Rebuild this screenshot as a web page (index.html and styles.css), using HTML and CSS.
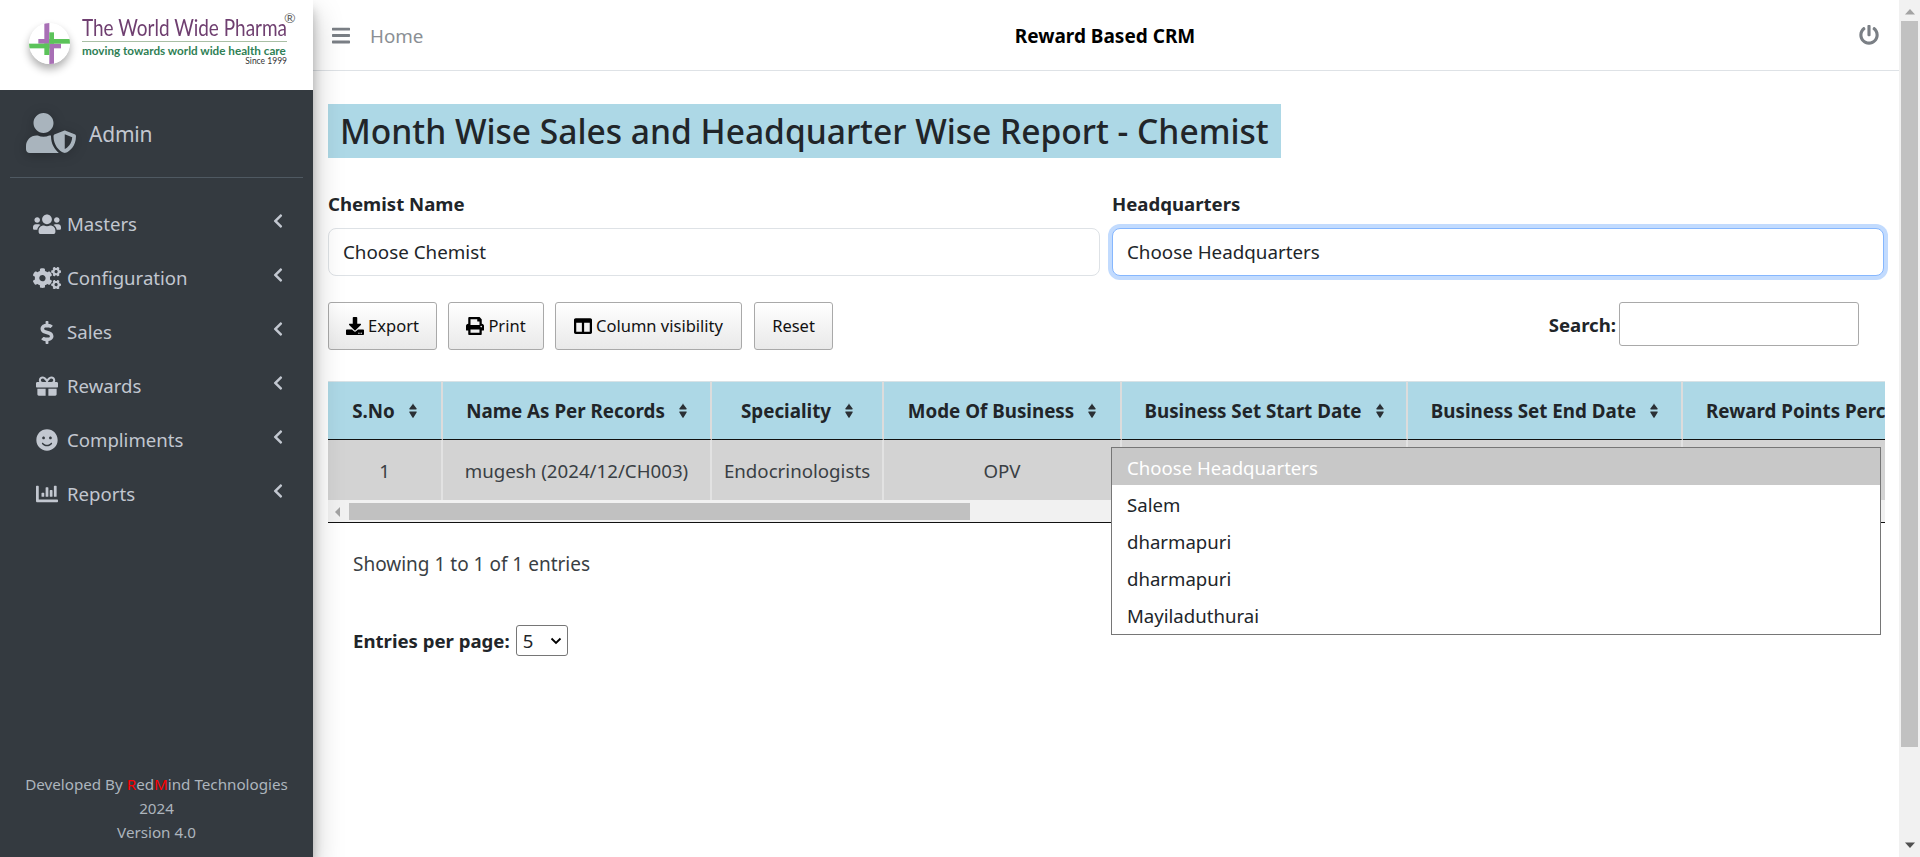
FILE: index.html
```html
<!DOCTYPE html>
<html lang="en">
<head>
<meta charset="utf-8">
<title>Month Wise Sales and Headquarter Wise Report - Chemist</title>
<link rel="stylesheet" href="styles.css">
</head>
<body>
<svg class="defs" aria-hidden="true">
  <symbol id="i-chev" viewBox="0 0 320 512"><path d="M34.52 239.03L228.87 44.69c9.37-9.37 24.57-9.37 33.94 0l22.67 22.67c9.36 9.36 9.37 24.52.04 33.9L131.49 256l154.02 154.75c9.34 9.38 9.32 24.54-.04 33.9l-22.67 22.67c-9.37 9.37-24.57 9.37-33.94 0L34.52 272.97c-9.37-9.37-9.37-24.57 0-33.94z"/></symbol>
  <symbol id="i-sort" viewBox="0 0 8 15"><path d="M3.6.3 7.6 5.6c.3.4 0 .9-.4.9H.8c-.4 0-.7-.5-.4-.9L4.4.3c-.2-.2-.6-.2-.8 0zM.8 8.5h6.4c.4 0 .7.5.4.9L4.4 14.7c-.2.2-.6.2-.8 0L.4 9.4c-.3-.4 0-.9.4-.9z"/></symbol>
</svg>
<div class="app">
  <aside class="sidebar">
    <div class="brand">
      <svg class="brand-mark" viewBox="87 69 123 123">
        <circle cx="148.5" cy="130.5" r="61.5" fill="#fff"/>
        <g fill="#a86fb5"><rect x="133" y="69" width="15" height="62"/><rect x="148" y="131" width="14" height="61"/><rect x="115" y="117" width="33" height="14"/><rect x="148" y="131" width="35" height="14"/></g>
        <g fill="#5cc35a"><rect x="87" y="131" width="61" height="14"/><rect x="148" y="117" width="62" height="14"/><rect x="148" y="97" width="14" height="34"/><rect x="133" y="131" width="15" height="34"/></g>
      </svg>
      <div class="brand-text">
        <div class="brand-name"><span class="brand-name-text">The World Wide Pharma</span><span class="brand-reg">®</span></div>
        <div class="brand-tag">moving towards world wide health care</div>
        <div class="brand-since">Since 1999</div>
      </div>
    </div>
    <div class="user">
      <svg class="user-icon" viewBox="0 0 640 512"><path d="M622.3 271.1l-115.2-45c-4.1-1.6-12.6-3.7-22.2 0l-115.2 45c-10.7 4.2-17.7 14-17.7 24.9 0 111.6 68.7 188.8 132.9 213.9 9.6 3.7 18 1.6 22.2 0C558.4 489.9 640 420.5 640 296c0-10.9-7-20.7-17.7-24.9zM496 462.4V273.3l95.5 37.3c-5.6 87.1-60.9 135.4-95.5 151.8zM224 256c70.7 0 128-57.3 128-128S294.7 0 224 0 96 57.3 96 128s57.3 128 128 128zm96 40c0-2.5.8-4.8 1.1-7.2-2.5-.1-4.9-.8-7.5-.8h-16.7c-22.2 10.2-46.9 16-72.9 16s-50.6-5.8-72.9-16h-16.7C60.2 288 0 348.2 0 422.4V464c0 26.5 21.5 48 48 48h352c6.8 0 13.3-1.5 19.2-4-54-42.9-99.2-116.7-99.2-212z"/></svg>
      <span class="user-name">Admin</span>
    </div>
    <nav class="nav">
      <a class="nav-item"><span class="nav-ico"><svg class="ico-w" viewBox="0 0 640 512"><path d="M96 224c35.3 0 64-28.7 64-64s-28.7-64-64-64-64 28.7-64 64 28.7 64 64 64zm448 0c35.3 0 64-28.7 64-64s-28.7-64-64-64-64 28.7-64 64 28.7 64 64 64zm32 32h-64c-17.6 0-33.5 7.1-45.1 18.6 40.3 22.1 68.9 62 75.1 109.4h66c17.7 0 32-14.3 32-32v-32c0-35.3-28.7-64-64-64zm-256 0c61.9 0 112-50.1 112-112S381.9 32 320 32 208 82.1 208 144s50.1 112 112 112zm76.8 32h-8.3c-20.8 10-43.9 16-68.5 16s-47.6-6-68.5-16h-8.3C179.6 288 128 339.6 128 403.2V432c0 26.5 21.5 48 48 48h288c26.5 0 48-21.5 48-48v-28.8c0-63.6-51.6-115.2-115.2-115.2zm-223.7-13.4C161.5 263.1 145.6 256 128 256H64c-35.3 0-64 28.7-64 64v32c0 17.7 14.3 32 32 32h65.9c6.3-47.4 34.9-87.3 75.2-109.4z"/></svg></span><span class="nav-label">Masters</span><svg class="chev"><use href="#i-chev"/></svg></a>
      <a class="nav-item"><span class="nav-ico"><svg class="ico-w" viewBox="0 0 640 512"><path d="M512.1 191l-8.2 14.3c-3 5.3-9.4 7.5-15.1 5.4-11.8-4.4-22.6-10.7-32.1-18.6-4.6-3.8-5.8-10.5-2.8-15.7l8.2-14.3c-6.9-8-12.3-17.3-15.9-27.4h-16.5c-6 0-11.2-4.3-12.2-10.3-2-12-2.1-24.6 0-37.1 1-6 6.2-10.4 12.2-10.4h16.5c3.6-10.1 9-19.4 15.9-27.4l-8.2-14.3c-3-5.2-1.9-11.9 2.8-15.7 9.5-7.9 20.4-14.2 32.1-18.6 5.7-2.1 12.1.1 15.1 5.4l8.2 14.3c10.5-1.9 21.2-1.9 31.7 0L552 6.3c3-5.3 9.4-7.5 15.1-5.4 11.8 4.4 22.6 10.7 32.1 18.6 4.6 3.8 5.8 10.5 2.8 15.7l-8.2 14.3c6.9 8 12.3 17.3 15.9 27.4h16.5c6 0 11.2 4.3 12.2 10.3 2 12 2.1 24.6 0 37.1-1 6-6.2 10.4-12.2 10.4h-16.5c-3.6 10.1-9 19.4-15.9 27.4l8.2 14.3c3 5.2 1.9 11.9-2.8 15.7-9.5 7.9-20.4 14.2-32.1 18.6-5.7 2.1-12.1-.1-15.1-5.4l-8.2-14.3c-10.4 1.9-21.2 1.9-31.7 0zm-10.5-58.8c38.5 29.6 82.4-14.3 52.8-52.8-38.5-29.7-82.4 14.3-52.8 52.8zM386.3 286.1l33.7 16.8c10.1 5.8 14.5 18.1 10.5 29.1-8.9 24.2-26.4 46.4-42.6 65.8-7.4 8.9-20.2 11.1-30.3 5.3l-29.1-16.8c-16 13.7-34.6 24.6-54.9 31.7v33.6c0 11.6-8.3 21.6-19.7 23.6-24.6 4.2-50.4 4.4-75.9 0-11.5-2-20-11.9-20-23.6V418c-20.3-7.2-38.9-18-54.9-31.7L74 403c-10 5.8-22.9 3.6-30.3-5.3-16.2-19.4-33.3-41.6-42.2-65.7-4-10.9.4-23.2 10.5-29.1l33.3-16.8c-3.9-20.9-3.9-42.4 0-63.4L12 205.8c-10.1-5.8-14.6-18.1-10.5-29 8.9-24.2 26-46.4 42.2-65.8 7.4-8.9 20.2-11.1 30.3-5.3l29.1 16.8c16-13.7 34.6-24.6 54.9-31.7V57.1c0-11.5 8.2-21.5 19.6-23.5 24.6-4.2 50.5-4.4 76-.1 11.5 2 20 11.9 20 23.6v33.6c20.3 7.2 38.9 18 54.9 31.7l29.1-16.8c10-5.8 22.9-3.6 30.3 5.3 16.2 19.4 33.2 41.6 42.1 65.8 4 10.9.1 23.2-10 29.1l-33.7 16.8c3.9 21 3.9 42.5 0 63.5zm-117.6 21.1c59.2-77-28.7-164.9-105.7-105.7-59.2 77 28.7 164.9 105.7 105.7zm243.4 182.7l-8.2 14.3c-3 5.3-9.4 7.5-15.1 5.4-11.8-4.4-22.6-10.7-32.1-18.6-4.6-3.8-5.8-10.5-2.8-15.7l8.2-14.3c-6.9-8-12.3-17.3-15.9-27.4h-16.5c-6 0-11.2-4.3-12.2-10.3-2-12-2.1-24.6 0-37.1 1-6 6.2-10.4 12.2-10.4h16.5c3.6-10.1 9-19.4 15.9-27.4l-8.2-14.3c-3-5.2-1.9-11.9 2.8-15.7 9.5-7.9 20.4-14.2 32.1-18.6 5.7-2.1 12.1.1 15.1 5.4l8.2 14.3c10.5-1.9 21.2-1.9 31.7 0l8.2-14.3c3-5.3 9.4-7.5 15.1-5.4 11.8 4.4 22.6 10.7 32.1 18.6 4.6 3.8 5.8 10.5 2.8 15.7l-8.2 14.3c6.9 8 12.3 17.3 15.9 27.4h16.5c6 0 11.2 4.3 12.2 10.3 2 12 2.1 24.6 0 37.1-1 6-6.2 10.4-12.2 10.4h-16.5c-3.6 10.1-9 19.4-15.9 27.4l8.2 14.3c3 5.2 1.9 11.9-2.8 15.7-9.5 7.9-20.4 14.2-32.1 18.6-5.7 2.1-12.1-.1-15.1-5.4l-8.2-14.3c-10.4 1.9-21.2 1.9-31.7 0zM501.6 431c38.5 29.6 82.4-14.3 52.8-52.8-38.5-29.6-82.4 14.3-52.8 52.8z"/></svg></span><span class="nav-label">Configuration</span><svg class="chev"><use href="#i-chev"/></svg></a>
      <a class="nav-item"><span class="nav-ico"><svg class="ico-dollar" viewBox="0 0 288 512"><path d="M209.2 233.4l-108-31.6C88.7 198.2 80 186.5 80 173.5c0-16.3 13.2-29.5 29.5-29.5h66.3c12.2 0 24.2 3.7 34.2 10.5 6.1 4.1 14.3 3.1 19.5-2l34.8-34c7.1-6.9 6.1-18.4-1.8-24.5C238 74.8 207.4 64.1 176 64V16c0-8.8-7.2-16-16-16h-32c-8.8 0-16 7.2-16 16v48h-2.5C45.8 64-5.4 118.7.5 183.6c4.2 46.1 39.4 83.6 83.8 96.6l102.5 30c12.5 3.7 21.2 15.3 21.2 28.3 0 16.3-13.2 29.5-29.5 29.5h-66.3C100 368 88 364.3 78 357.5c-6.1-4.1-14.3-3.1-19.5 2l-34.8 34c-7.1 6.9-6.1 18.4 1.8 24.5 24.5 19.2 55.1 29.9 86.5 30v48c0 8.8 7.2 16 16 16h32c8.8 0 16-7.2 16-16v-48.2c46.6-.9 90.3-28.6 105.7-72.7 21.5-61.6-14.6-124.8-72.5-141.7z"/></svg></span><span class="nav-label">Sales</span><svg class="chev"><use href="#i-chev"/></svg></a>
      <a class="nav-item"><span class="nav-ico"><svg class="ico-sq" viewBox="0 0 512 512"><path d="M32 448c0 17.7 14.3 32 32 32h160V320H32v128zm256 32h160c17.7 0 32-14.3 32-32V320H288v160zm192-320h-42.1c6.2-12.1 10.1-25.5 10.1-40 0-48.5-39.5-88-88-88-41.6 0-68.5 21.3-103 68.3-34.5-47-61.4-68.3-103-68.3-48.5 0-88 39.5-88 88 0 14.5 3.8 27.9 10.1 40H32c-17.7 0-32 14.3-32 32v80c0 8.8 7.2 16 16 16h480c8.8 0 16-7.2 16-16v-80c0-17.7-14.3-32-32-32zm-326.1 0c-22.1 0-40-17.9-40-40s17.9-40 40-40c19.9 0 34.6 3.3 86.1 80h-86.1zm206.1 0h-86.1c51.4-76.5 65.7-80 86.1-80 22.1 0 40 17.9 40 40s-17.9 40-40 40z"/></svg></span><span class="nav-label">Rewards</span><svg class="chev"><use href="#i-chev"/></svg></a>
      <a class="nav-item"><span class="nav-ico"><svg class="ico-sq" viewBox="0 0 496 512"><path d="M248 8C111 8 0 119 0 256s111 248 248 248 248-111 248-248S385 8 248 8zm80 168c17.7 0 32 14.3 32 32s-14.3 32-32 32-32-14.3-32-32 14.3-32 32-32zm-160 0c17.7 0 32 14.3 32 32s-14.3 32-32 32-32-14.3-32-32 14.3-32 32-32zm194.8 170.2C334.3 380.4 292.5 400 248 400s-86.3-19.6-114.8-53.8c-13.6-16.3 11-36.7 24.6-20.5 22.4 26.9 55.2 42.2 90.2 42.2s67.8-15.4 90.2-42.2c13.4-16.2 38.1 4.2 24.6 20.5z"/></svg></span><span class="nav-label">Compliments</span><svg class="chev"><use href="#i-chev"/></svg></a>
      <a class="nav-item"><span class="nav-ico"><svg class="ico-sq" viewBox="0 0 512 512"><path d="M332.8 320h38.4c6.4 0 12.8-6.4 12.8-12.8V172.8c0-6.4-6.4-12.8-12.8-12.8h-38.4c-6.4 0-12.8 6.4-12.8 12.8v134.4c0 6.4 6.4 12.8 12.8 12.8zm96 0h38.4c6.4 0 12.8-6.4 12.8-12.8V76.8c0-6.4-6.4-12.8-12.8-12.8h-38.4c-6.4 0-12.8 6.4-12.8 12.8v230.4c0 6.4 6.4 12.8 12.8 12.8zm-288 0h38.4c6.4 0 12.8-6.4 12.8-12.8v-70.4c0-6.4-6.4-12.8-12.8-12.8h-38.4c-6.4 0-12.8 6.4-12.8 12.8v70.4c0 6.4 6.4 12.8 12.8 12.8zm96 0h38.4c6.4 0 12.8-6.4 12.8-12.8V108.8c0-6.4-6.4-12.8-12.8-12.8h-38.4c-6.4 0-12.8 6.4-12.8 12.8v198.4c0 6.4 6.4 12.8 12.8 12.8zM496 384H64V80c0-8.84-7.16-16-16-16H16C7.16 64 0 71.16 0 80v336c0 17.67 14.33 32 32 32h464c8.84 0 16-7.16 16-16v-32c0-8.84-7.16-16-16-16z"/></svg></span><span class="nav-label">Reports</span><svg class="chev"><use href="#i-chev"/></svg></a>
    </nav>
    <footer class="side-foot">
      <div>Developed By <span class="red">R</span>ed<span class="red">M</span>ind Technologies</div>
      <div>2024</div>
      <div>Version 4.0</div>
    </footer>
  </aside>

  <main class="main">
    <header class="topbar">
      <div class="top-left">
        <svg class="bars" viewBox="0 0 448 512"><path d="M16 132h416c8.837 0 16-7.163 16-16V76c0-8.837-7.163-16-16-16H16C7.163 60 0 67.163 0 76v40c0 8.837 7.163 16 16 16zm0 160h416c8.837 0 16-7.163 16-16v-40c0-8.837-7.163-16-16-16H16c-8.837 0-16 7.163-16 16v40c0 8.837 7.163 16 16 16zm0 160h416c8.837 0 16-7.163 16-16v-40c0-8.837-7.163-16-16-16H16c-8.837 0-16 7.163-16 16v40c0 8.837 7.163 16 16 16z"/></svg>
        <span class="home">Home</span>
      </div>
      <div class="top-title">Reward Based CRM</div>
      <div class="top-right">
        <svg class="power" viewBox="0 0 512 512"><path d="M400 54.1c63 45 104 118.6 104 201.9 0 136.8-110.8 247.7-247.5 248C120 504.3 8.2 393 8 256.4 7.9 173.1 48.9 99.3 111.8 54.2c11.7-8.3 28-4.8 35 7.7L162.6 90c5.9 10.5 3.1 23.8-6.6 31-41.5 30.8-68 79.6-68 134.9-.1 92.3 74.5 168.1 168 168.1 91.6 0 168.6-74.2 168-169.1-.3-51.8-24.7-101.8-68.1-134-9.7-7.2-12.4-20.5-6.5-30.9l15.8-28.1c7-12.4 23.2-16.1 34.8-7.8zM296 264V24c0-13.3-10.7-24-24-24h-32c-13.3 0-24 10.7-24 24v240c0 13.3 10.7 24 24 24h32c13.3 0 24-10.7 24-24z"/></svg>
      </div>
    </header>

    <section class="content">
      <h1 class="title">Month Wise Sales and Headquarter Wise Report - Chemist</h1>

      <div class="filters">
        <div class="field">
          <label class="field-label">Chemist Name</label>
          <div class="select-box">Choose Chemist</div>
        </div>
        <div class="field">
          <label class="field-label">Headquarters</label>
          <div class="select-box is-focus">Choose Headquarters</div>
          <ul class="menu">
            <li class="menu-item is-active">Choose Headquarters</li>
            <li class="menu-item">Salem</li>
            <li class="menu-item">dharmapuri</li>
            <li class="menu-item">dharmapuri</li>
            <li class="menu-item">Mayiladuthurai</li>
          </ul>
        </div>
      </div>

      <div class="toolbar">
        <button class="btn btn-export"><svg class="btn-ico" viewBox="0 0 512 512"><path d="M216 0h80c13.3 0 24 10.7 24 24v168h87.7c17.8 0 26.7 21.5 14.1 34.1L269.7 378.3c-7.5 7.5-19.8 7.5-27.3 0L90.1 226.1c-12.6-12.6-3.7-34.1 14.1-34.1H192V24c0-13.3 10.7-24 24-24zm296 376v112c0 13.3-10.7 24-24 24H24c-13.3 0-24-10.7-24-24V376c0-13.3 10.7-24 24-24h146.7l49 49c20.1 20.1 52.5 20.1 72.6 0l49-49H488c13.3 0 24 10.7 24 24zm-124 88c0-11-9-20-20-20s-20 9-20 20 9 20 20 20 20-9 20-20zm64 0c0-11-9-20-20-20s-20 9-20 20 9 20 20 20 20-9 20-20z"/></svg>Export</button>
        <button class="btn btn-print"><svg class="btn-ico" viewBox="0 0 512 512"><path d="M448 192V77.25c0-8.49-3.37-16.62-9.37-22.63L393.37 9.37c-6-6-14.14-9.37-22.63-9.37H96C78.33 0 64 14.33 64 32v160c-35.35 0-64 28.65-64 64v112c0 8.84 7.16 16 16 16h48v96c0 17.67 14.33 32 32 32h320c17.67 0 32-14.33 32-32v-96h48c8.84 0 16-7.16 16-16V256c0-35.35-28.65-64-64-64zm-64 256H128v-96h256v96zm0-224H128V64h192v48c0 8.84 7.16 16 16 16h48v96zm48 72c-13.25 0-24-10.75-24-24 0-13.26 10.75-24 24-24s24 10.74 24 24c0 13.25-10.75 24-24 24z"/></svg>Print</button>
        <button class="btn btn-cols"><svg class="btn-ico" viewBox="0 0 512 512"><path d="M464 32H48C21.49 32 0 53.49 0 80v352c0 26.51 21.49 48 48 48h416c26.51 0 48-21.49 48-48V80c0-26.51-21.49-48-48-48zM224 416H64V160h160v256zm224 0H288V160h160v256z"/></svg>Column visibility</button>
        <button class="btn btn-reset">Reset</button>
        <label class="search"><span class="search-label">Search:</span><span class="search-input"></span></label>
      </div>

      <div class="table-wrap">
        <div class="table-clip">
          <table class="report">
            <colgroup><col class="c1"><col class="c2"><col class="c3"><col class="c4"><col class="c5"><col class="c6"><col class="c7"></colgroup>
            <thead>
              <tr>
                <th><span class="th-in">S.No<svg class="sort"><use href="#i-sort"/></svg></span></th>
                <th><span class="th-in">Name As Per Records<svg class="sort"><use href="#i-sort"/></svg></span></th>
                <th><span class="th-in">Speciality<svg class="sort"><use href="#i-sort"/></svg></span></th>
                <th><span class="th-in">Mode Of Business<svg class="sort"><use href="#i-sort"/></svg></span></th>
                <th><span class="th-in">Business Set Start Date<svg class="sort"><use href="#i-sort"/></svg></span></th>
                <th><span class="th-in">Business Set End Date<svg class="sort"><use href="#i-sort"/></svg></span></th>
                <th class="th-last">Reward Points Percentage</th>
              </tr>
            </thead>
            <tbody>
              <tr><td>1</td><td>mugesh (2024/12/CH003)</td><td>Endocrinologists</td><td>OPV</td><td></td><td></td><td></td></tr>
            </tbody>
          </table>
        </div>
        <div class="hscroll">
          <svg class="hscroll-arrow" viewBox="0 0 6 10"><path d="M5 0v10L0 5z"/></svg>
          <div class="hscroll-thumb"></div>
        </div>
      </div>

      <p class="info">Showing 1 to 1 of 1 entries</p>
      <div class="entries">
        <span class="entries-label">Entries per page:</span>
        <span class="entries-select"><span>5</span><svg class="entries-caret" viewBox="0 0 12 8"><path d="M1.5 1.5 6 6l4.5-4.5" fill="none" stroke="#000" stroke-width="1.8"/></svg></span>
      </div>
    </section>
  </main>

  <div class="vscroll">
    <svg class="vs-arrow" viewBox="0 0 10 6"><path d="M5 0l5 5.5H0z"/></svg>
    <div class="vs-thumb"></div>
    <svg class="vs-arrow vs-down" viewBox="0 0 10 6"><path d="M5 6L0 .5h10z"/></svg>
  </div>
</div>
</body>
</html>
```

FILE: styles.css
```css
* { box-sizing: border-box; }
html, body { margin: 0; height: 100%; }
body {
  font-family: "Noto Sans", "Open Sans", "Liberation Sans", sans-serif;
  font-size: 16px;
  line-height: 24px;
  color: #212529;
  background: #fff;
  overflow: hidden;
}
.defs { display: none; }
.app { display: flex; width: 1920px; height: 857px; }

/* Sidebar */
.sidebar {
  position: relative;
  z-index: 5;
  width: 313px;
  flex: none;
  display: flex;
  flex-direction: column;
  background: #343a40;
  color: #c2c7d0;
  box-shadow: 0 14px 28px rgba(0,0,0,.25), 0 10px 10px rgba(0,0,0,.22);
}
.brand {
  height: 90px;
  flex: none;
  background: #fff;
  display: flex;
  align-items: flex-start;
  padding: 15px 0 0 29px;
  gap: 12px;
}
.brand-mark {
  width: 41px;
  height: 41px;
  margin-top: 8px;
  border-radius: 50%;
  flex: none;
  box-shadow: 0 5px 9px rgba(0,0,0,.32);
}
.brand-text { width: 205px; }
.brand-name {
  position: relative;
  font-family: Lato, sans-serif;
  font-size: 24px;
  line-height: 24px;
  color: #6f3f70;
  white-space: nowrap;
  padding-bottom: 2px;
  border-bottom: 1px solid #a9bfa5;
}
.brand-name-text {
  display: inline-block;
  transform: scaleX(.79);
  transform-origin: left center;
}
.brand-reg {
  position: absolute;
  top: -4px;
  left: 202px;
  font-size: 14px;
  line-height: 14px;
  color: #666;
}
.brand-tag {
  font-family: Lato, sans-serif;
  font-size: 11.7px;
  font-weight: 700;
  line-height: 14px;
  margin-top: 1px;
  color: #2f7f55;
  white-space: nowrap;
}
.brand-since {
  font-family: Lato, sans-serif;
  font-size: 8.5px;
  line-height: 9px;
  margin-top: 0;
  color: #333;
  text-align: right;
}
.user {
  height: 88px;
  flex: none;
  margin: 0 10px;
  padding-left: 16px;
  display: flex;
  align-items: center;
  border-bottom: 1px solid #4f5962;
}
.user-icon { width: 50px; height: 40px; fill: #a9b4bd; flex: none; margin-top: -1px; filter: drop-shadow(0 2px 6px rgba(0,0,0,.25)); }
.user-name { margin-left: 13px; font-size: 21px; color: #c2c7d0; letter-spacing: -.2px; }
.nav { padding-top: 19px; display: flex; flex-direction: column; }
.nav-item {
  height: 54px;
  display: flex;
  align-items: center;
  font-size: 18.6px;
  color: #c2c7d0;
  padding-left: 33px;
  position: relative;
}
.nav-ico { width: 28px; flex: none; display: flex; justify-content: center; margin-right: 6px; }
.ico-w { width: 28px; height: 22.4px; fill: #c2c7d0; }
.ico-sq { width: 22px; height: 22px; fill: #c2c7d0; }
.ico-dollar { width: 14px; height: 23px; fill: #c2c7d0; }
.nav-label { flex: 1; }
.chev { width: 12px; height: 16px; fill: #c2c7d0; margin-right: 29px; margin-top: -6px; flex: none; }
.side-foot {
  margin-top: auto;
  padding-bottom: 13px;
  text-align: center;
  font-size: 15.2px;
  line-height: 24px;
  color: #adb5bd;
}
.red { color: #ff0000; }

/* Main */
.main { flex: 1; min-width: 0; display: flex; flex-direction: column; }
.topbar {
  height: 71px;
  flex: none;
  display: grid;
  grid-template-columns: 1fr auto 1fr;
  align-items: center;
  border-bottom: 1px solid #dee2e6;
  padding: 0 21px 0 19px;
}
.top-left { display: flex; align-items: center; }
.bars { width: 18px; height: 21px; fill: #7a7f85; margin-right: 20px; }
.home { font-size: 18.8px; color: #8a8f94; padding-top: 2px; }
.top-title { font-size: 19px; font-weight: 700; color: #000; padding-top: 2px; }
.top-right { display: flex; justify-content: flex-end; }
.power { width: 20px; height: 20px; fill: #7a7f85; margin-right: -1px; }
.content { padding: 33px 13px 0 15px; }
.title {
  display: table;
  margin: 0 0 34px;
  padding: 1px 12px 0;
  height: 54px;
  background: #add8e6;
  font-size: 33.55px;
  font-weight: 500;
  line-height: 53px;
  color: #212529;
}
.filters { display: grid; grid-template-columns: 772px 772px; column-gap: 12px; }
.field { position: relative; }
.field-label { display: block; font-size: 18.6px; font-weight: 700; line-height: 24px; margin-bottom: 12px; }
.select-box {
  height: 48px;
  border: 1px solid #dee2e6;
  border-radius: 8px;
  padding: 0 14px;
  font-size: 18.8px;
  line-height: 47px;
  background: #fff;
}
.is-focus { border-color: #86b7fe; box-shadow: 0 0 0 4px rgba(13,110,253,.25); }
.menu {
  position: absolute;
  z-index: 10;
  top: 255px;
  left: -1px;
  width: 770px;
  height: 188px;
  margin: 0;
  padding: 0;
  list-style: none;
  background: #fff;
  border: 1px solid #767676;
}
.menu-item { height: 37px; padding: 0 15px; font-size: 18.6px; line-height: 39px; }
.is-active { background: #c8c8c8; color: #fff; }

/* Toolbar */
.toolbar { display: flex; align-items: flex-start; margin-top: 26px; height: 48px; }
.btn {
  height: 48px;
  display: inline-flex;
  align-items: center;
  justify-content: center;
  border: 1px solid #a9a9a9;
  border-radius: 3px;
  background: linear-gradient(to bottom, #fff 0%, #e9e9e9 100%);
  font: inherit;
  font-size: 16.5px;
  color: #111;
  padding: 0;
  margin-right: 11px;
  flex: none;
}
.btn-ico { width: 18px; height: 18px; fill: #000; margin-right: 4px; }
.btn-export { width: 109px; }
.btn-print { width: 96px; }
.btn-cols { width: 187px; margin-right: 12px; }
.btn-reset { width: 79px; margin-right: 0; }
.search { margin-left: auto; margin-right: 27px; display: flex; align-items: flex-start; }
.search-label { font-size: 18.6px; font-weight: 700; line-height: 46px; margin-right: 3px; }
.search-input { display: block; width: 240px; height: 44px; border: 1px solid #a9a9a9; border-radius: 3px; background: #fff; }

/* Table */
.table-wrap { margin-top: 31px; width: 1557px; border-bottom: 1px solid #111; background: #f1f1f1; }
.table-clip { overflow: hidden; height: 119px; }
.report { table-layout: fixed; width: 1860px; border-collapse: separate; border-spacing: 0; }
.c1 { width: 115px; } .c2 { width: 269px; } .c3 { width: 172px; } .c4 { width: 238px; }
.c5 { width: 286px; } .c6 { width: 275px; } .c7 { width: 505px; }
.report th {
  height: 59px;
  padding: 0;
  background: #add8e6;
  border-top: 1px solid #d8e2e6;
  border-right: 2px solid #dcdcdc;
  border-bottom: 1px solid #111;
  font-size: 18.8px;
  font-weight: 700;
  text-align: center;
  white-space: nowrap;
}
.report th.th-last { text-align: left; padding-left: 23px; }
.th-in { display: inline-flex; align-items: center; gap: 14px; }
.sort { width: 8px; height: 15px; fill: #2b3035; flex: none; }
.report td {
  height: 60px;
  padding: 2px 0 0;
  background: #d3d3d3;
  border-right: 2px solid #e2e2e2;
  font-size: 18.7px;
  color: #3a3f44;
  text-align: center;
  white-space: nowrap;
}
.hscroll { position: relative; height: 22px; padding: 3px 0 2px 21px; display: flex; }
.hscroll-arrow { position: absolute; left: 7px; top: 7px; width: 6px; height: 10px; fill: #a3a3a3; }
.hscroll-thumb { width: 621px; height: 17px; background: #c1c1c1; }

.info { margin: 29px 0 0; padding-left: 25px; font-size: 19px; line-height: 24px; color: #3a3f44; }
.entries { margin-top: 49px; padding-left: 25px; display: flex; align-items: center; height: 31px; }
.entries-label { font-size: 18.6px; font-weight: 700; margin-right: 6px; }
.entries-select {
  width: 52px;
  height: 31px;
  border: 1px solid #767676;
  border-radius: 3px;
  display: flex;
  align-items: center;
  justify-content: space-between;
  padding: 0 5px 0 6px;
  font-size: 18.6px;
  background: #fff;
}
.entries-caret { width: 12px; height: 8px; }

/* Page scrollbar */
.vscroll {
  width: 21px;
  flex: none;
  background: #f1f1f1;
  display: flex;
  flex-direction: column;
  align-items: center;
  height: 857px;
  padding: 9px 0 0;
}
.vs-arrow { width: 10px; height: 6px; fill: #a3a3a3; flex: none; }
.vs-thumb { width: 17px; height: 726px; margin-top: 6px; background: #c1c1c1; flex: none; }
.vs-down { fill: #505050; margin-top: auto; margin-bottom: 9px; }
```
